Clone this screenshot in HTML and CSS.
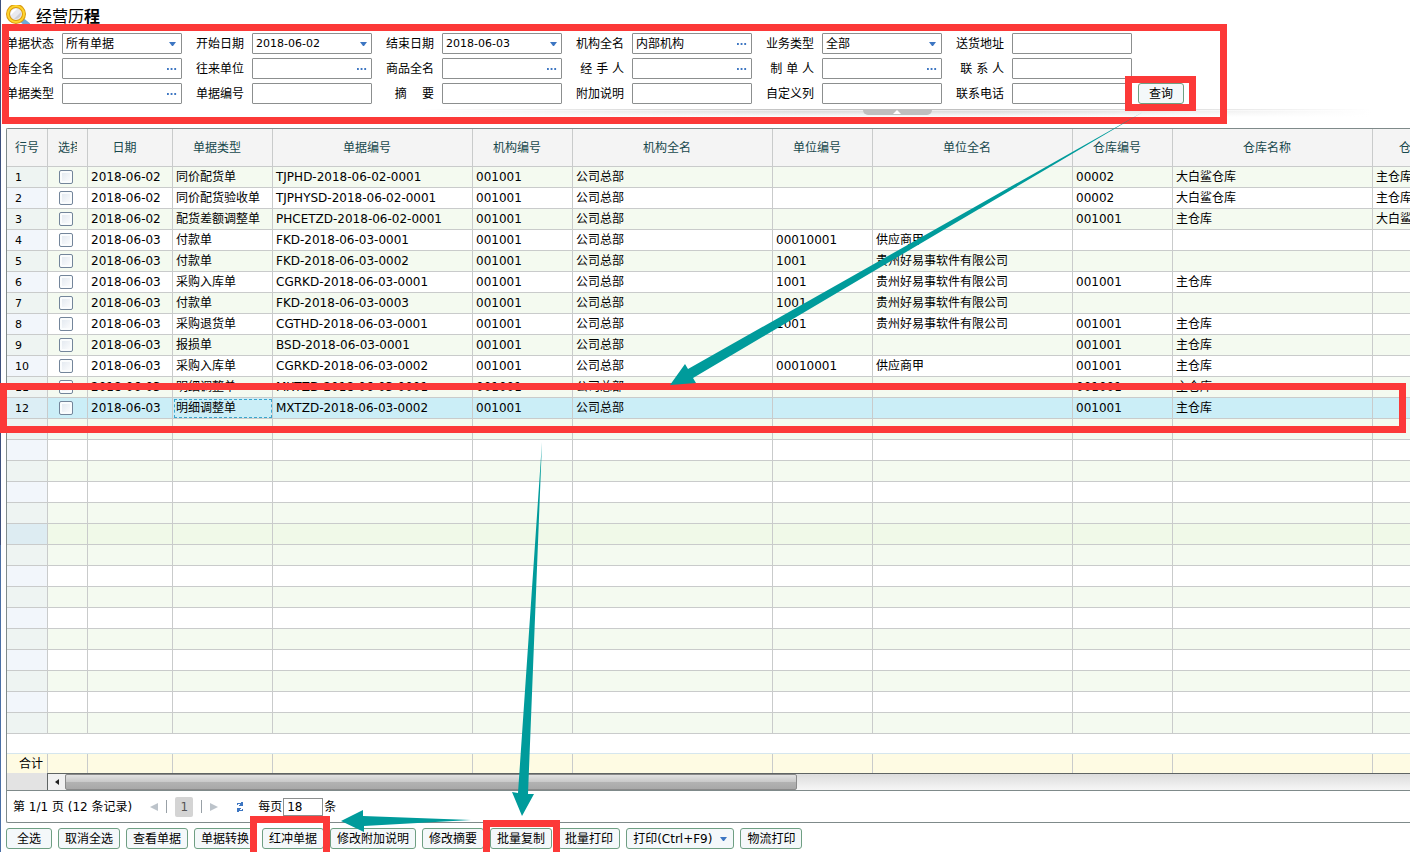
FILE: index.html
```html
<!DOCTYPE html>
<html lang="zh-CN">
<head>
<meta charset="utf-8">
<title>经营历程</title>
<link rel="stylesheet" href="styles.css">
</head>
<body>
<main class="page">
  <header class="title-bar">
    <svg class="title-icon" width="24" height="24" viewBox="0 0 24 24" aria-hidden="true">
      <path d="M17 16l5 4" stroke="#6fa9d6" stroke-width="5" stroke-linecap="round"/>
      <circle cx="10" cy="9" r="8" fill="#e9e9ee" stroke="#d99a10" stroke-width="4"/>
      <circle cx="10" cy="9" r="8" fill="none" stroke="#ffd52e" stroke-width="2"/>
      <path d="M5 10a5 5 0 0 1 6-6z" fill="#fff"/>
      <path d="M8 14l7-7a6 6 0 0 1-7 7z" fill="#cfcfd6"/>
    </svg>
    <h1 class="title">经营历<b>程</b></h1>
  </header>

  <form class="filters">
    <div class="filter-grid">
      <div class="field"><label for="f1">单据状态</label><span class="box"><select id="f1"><option>所有单据</option></select><svg class="caret" width="7" height="4" viewBox="0 0 7 4"><path d="M0 0h7L4 4H3z"/></svg></span></div>
      <div class="field"><label for="f2">开始日期</label><span class="box"><input id="f2" type="text" value="2018-06-02"><button type="button" class="pick" aria-label="选择开始日期"><svg width="7" height="4" viewBox="0 0 7 4"><path d="M0 0h7L4 4H3z"/></svg></button></span></div>
      <div class="field"><label for="f3">结束日期</label><span class="box"><input id="f3" type="text" value="2018-06-03"><button type="button" class="pick" aria-label="选择结束日期"><svg width="7" height="4" viewBox="0 0 7 4"><path d="M0 0h7L4 4H3z"/></svg></button></span></div>
      <div class="field"><label for="f4">机构全名</label><span class="box"><input id="f4" type="text" value="内部机构"><button type="button" class="pick" aria-label="选择机构"><svg width="11" height="2" viewBox="0 0 11 2"><path d="M0 0h2v2H0zM4 0h2v2H4zM8 0h2v2H8z"/></svg></button></span></div>
      <div class="field"><label for="f5">业务类型</label><span class="box"><select id="f5"><option>全部</option></select><svg class="caret" width="7" height="4" viewBox="0 0 7 4"><path d="M0 0h7L4 4H3z"/></svg></span></div>
      <div class="field"><label for="f6">送货地址</label><span class="box"><input id="f6" type="text"></span></div>

      <div class="field"><label for="f7">仓库全名</label><span class="box"><input id="f7" type="text"><button type="button" class="pick" aria-label="选择仓库"><svg width="11" height="2" viewBox="0 0 11 2"><path d="M0 0h2v2H0zM4 0h2v2H4zM8 0h2v2H8z"/></svg></button></span></div>
      <div class="field"><label for="f8">往来单位</label><span class="box"><input id="f8" type="text"><button type="button" class="pick" aria-label="选择往来单位"><svg width="11" height="2" viewBox="0 0 11 2"><path d="M0 0h2v2H0zM4 0h2v2H4zM8 0h2v2H8z"/></svg></button></span></div>
      <div class="field"><label for="f9">商品全名</label><span class="box"><input id="f9" type="text"><button type="button" class="pick" aria-label="选择商品"><svg width="11" height="2" viewBox="0 0 11 2"><path d="M0 0h2v2H0zM4 0h2v2H4zM8 0h2v2H8z"/></svg></button></span></div>
      <div class="field"><label for="f10">经 手 人</label><span class="box"><input id="f10" type="text"><button type="button" class="pick" aria-label="选择经手人"><svg width="11" height="2" viewBox="0 0 11 2"><path d="M0 0h2v2H0zM4 0h2v2H4zM8 0h2v2H8z"/></svg></button></span></div>
      <div class="field"><label for="f11">制 单 人</label><span class="box"><input id="f11" type="text"><button type="button" class="pick" aria-label="选择制单人"><svg width="11" height="2" viewBox="0 0 11 2"><path d="M0 0h2v2H0zM4 0h2v2H4zM8 0h2v2H8z"/></svg></button></span></div>
      <div class="field"><label for="f12">联 系 人</label><span class="box"><input id="f12" type="text"></span></div>

      <div class="field"><label for="f13">单据类型</label><span class="box"><input id="f13" type="text"><button type="button" class="pick" aria-label="选择单据类型"><svg width="11" height="2" viewBox="0 0 11 2"><path d="M0 0h2v2H0zM4 0h2v2H4zM8 0h2v2H8z"/></svg></button></span></div>
      <div class="field"><label for="f14">单据编号</label><span class="box"><input id="f14" type="text"></span></div>
      <div class="field"><label for="f15">摘&nbsp;&nbsp;&nbsp;&nbsp;要</label><span class="box"><input id="f15" type="text"></span></div>
      <div class="field"><label for="f16">附加说明</label><span class="box"><input id="f16" type="text"></span></div>
      <div class="field"><label for="f17">自定义列</label><span class="box"><input id="f17" type="text"></span></div>
      <div class="field"><label for="f18">联系电话</label><span class="box"><input id="f18" type="text"></span></div>
    </div>
    <button type="button" class="btn">查询</button>
  </form>

  <div class="splitter">
    <button type="button" class="collapse" aria-label="收起查询条件"><svg width="8" height="4" viewBox="0 0 8 4"><path d="M4 0l4 4H0z" fill="#fff"/></svg></button>
  </div>

  <section class="grid">
    <div class="grid-body">
      <table class="data">
        <colgroup><col class="c-no"><col class="c-check"><col class="c-date"><col class="c-s"><col class="c-l"><col class="c-s"><col class="c-l"><col class="c-s"><col class="c-l"><col class="c-s"><col class="c-l"><col class="c-tail"></colgroup>
        <thead>
          <tr><th>行号</th><th><span class="clip">选择</span></th><th>日期</th><th>单据类型</th><th>单据编号</th><th>机构编号</th><th>机构全名</th><th>单位编号</th><th>单位全名</th><th>仓库编号</th><th>仓库名称</th><th>仓库</th></tr>
        </thead>
        <tbody id="rows"></tbody>
      </table>
    </div>
    <div class="totals">
      <table class="data">
        <colgroup><col class="c-no"><col class="c-check"><col class="c-date"><col class="c-s"><col class="c-l"><col class="c-s"><col class="c-l"><col class="c-s"><col class="c-l"><col class="c-s"><col class="c-l"><col class="c-tail"></colgroup>
        <tbody><tr><td class="total-label">合计</td><td></td><td></td><td></td><td></td><td></td><td></td><td></td><td></td><td></td><td></td><td></td></tr></tbody>
      </table>
    </div>
    <div class="scroll">
      <div class="scroll-corner"></div>
      <button type="button" class="scroll-left" aria-label="向左滚动"><svg width="4" height="6" viewBox="0 0 4 6"><path d="M4 0v6L0 3z" fill="#222"/></svg></button>
      <div class="scroll-track"><div class="scroll-thumb"></div></div>
    </div>
    <nav class="pager">
      <span class="pager-info">第 1/1 页 (12 条记录)</span>
      <button type="button" class="pager-arrow" aria-label="上一页"><svg width="8" height="8" viewBox="0 0 8 8"><path d="M8 0v8L0 4z" fill="#bcc3ca"/></svg></button>
      <span class="bar"></span>
      <button type="button" class="pager-page">1</button>
      <span class="bar"></span>
      <button type="button" class="pager-arrow" aria-label="下一页"><svg width="8" height="8" viewBox="0 0 8 8"><path d="M0 0v8l8-4z" fill="#bcc3ca"/></svg></button>
      <button type="button" class="pager-refresh" aria-label="刷新"><svg width="8" height="10" viewBox="0 0 8 10"><path d="M1 1h4V0h2v4H3V3h1V2H2v1H1zM7 9H3v1H1V6h4v1H4v1h2V7h1z" fill="#3d76c2"/></svg></button>
      <label for="size">每页</label><input id="size" class="pager-size" type="text" value="18"><span>条</span>
    </nav>
  </section>

  <footer class="actions">
    <button type="button" class="btn">全选</button>
    <button type="button" class="btn">取消全选</button>
    <button type="button" class="btn">查看单据</button>
    <button type="button" class="btn">单据转换</button>
    <button type="button" class="btn">红冲单据</button>
    <button type="button" class="btn">修改附加说明</button>
    <button type="button" class="btn">修改摘要</button>
    <button type="button" class="btn">批量复制</button>
    <button type="button" class="btn">批量打印</button>
    <button type="button" class="btn">打印(Ctrl+F9)<svg width="7" height="4" viewBox="0 0 7 4"><path d="M0 0h7L4 4H3z" fill="#3d76c2"/></svg></button>
    <button type="button" class="btn">物流打印</button>
  </footer>

  <svg class="marks" aria-hidden="true">
    <g fill="none" stroke="#fc3938" stroke-width="7">
      <path d="M5.500 27.500h1218v93H5.500z"/>
      <path d="M1128.500 79.500h64v28h-64z"/>
      <path d="M3.500 386.500h1399v43H3.500z"/>
      <path d="M253.500 819.500h73v60h-73z"/>
      <path d="M486.500 823.500h70v60h-70z"/>
    </g>
    <g fill="#009b9b">
      <path d="M1143 112L688 369L685 364L670 385L696 383L693 378Z"/>
      <path d="M542 442L518 793L512 792L522 816L534 794L528 794Z"/>
      <path d="M471 820L363 816V810L341 821L364 832V826Z"/>
    </g>
  </svg>
</main>
<script src="app.js"></script>
</body>
</html>
```
FILE: styles.css
```css
* { box-sizing: border-box; }

body {
  margin: 0;
  background: #fff;
  color: #000;
  font-family: "DejaVu Sans", "Noto Sans CJK SC", sans-serif;
  font-size: 12px;
  line-height: 16px;
}

button, input, select {
  margin: 0;
  font: inherit;
  color: inherit;
}

.page {
  position: relative;
  display: flex;
  flex-direction: column;
  min-height: 100vh;
  padding: 0 0 3px 6px;
  overflow: hidden;
  background: linear-gradient(#3c4f7c 0, #3c4f7c 64%, #4a6fa5 64%) left / 1px 100% no-repeat;
}

.title-bar {
  display: flex;
  align-items: center;
  gap: 6px;
  height: 33px;
}

.title {
  margin: 0;
  font-size: 16px;
  font-weight: 400;
}

.filters {
  display: flex;
  align-items: flex-end;
  gap: 6px;
}

.filter-grid {
  display: grid;
  grid-template-columns: repeat(6, 176px);
  gap: 4px 14px;
}

.field {
  display: flex;
  align-items: center;
  gap: 8px;
}

.field label {
  width: 48px;
  text-align: right;
  white-space: nowrap;
}

.box {
  position: relative;
  display: flex;
  flex: 1;
  height: 21px;
  border: 1px solid #8c8f8f;
  border-radius: 1px;
}

.box input, .box select {
  flex: 1;
  width: 100%;
  min-width: 0;
  padding: 0 3px;
  border: 0;
  background: none;
  appearance: none;
}

.box input { font-size: 11px; }
#f4 { font-size: 12px; }

.box .caret {
  position: absolute;
  right: 5px;
  top: 8px;
  pointer-events: none;
}

.box path { fill: #3d76c2; }

.pick {
  display: flex;
  align-items: center;
  justify-content: flex-end;
  width: 18px;
  padding: 0 4px;
  border: 0;
  background: none;
}

.btn {
  display: flex;
  align-items: center;
  justify-content: center;
  gap: 8px;
  min-width: 46px;
  height: 21px;
  padding: 0 6px;
  border: 1px solid #6f9f83;
  border-radius: 3px;
  background: #f4f8fa;
  white-space: nowrap;
}

.splitter {
  display: flex;
  justify-content: center;
  width: 950px;
  height: 8px;
  margin: 5px 0 11px 416px;
  background:
    linear-gradient(90deg, #fff, transparent 40%, transparent 60%, #fff),
    linear-gradient(#c0c0c0 1px, #fff 1px, #dcdcdc 2px, #fff);
}

.collapse {
  display: flex;
  align-items: flex-end;
  justify-content: center;
  width: 69px;
  height: 6px;
  padding: 0 0 1px;
  border: 0;
  border-radius: 0 0 5px 5px;
  background: #bfbfbf;
}

.grid {
  display: flex;
  flex: 1;
  flex-direction: column;
  border: 1px solid #7f8a8a;
  border-right: 0;
  border-radius: 2px 0 0 2px;
}

.grid-body {
  flex: 1;
  overflow: hidden;
}

.data {
  width: 1466px;
  table-layout: fixed;
  border-collapse: separate;
  border-spacing: 0;
}

.c-no { width: 41px; }
.c-check { width: 40px; }
.c-date { width: 85px; }
.c-s { width: 100px; }
.c-l { width: 200px; }
.c-tail { width: 100px; }

.data th, .data td {
  overflow: hidden;
  padding: 0 3px;
  border: solid #c9cbcb;
  border-width: 0 1px 1px 0;
  white-space: nowrap;
}

.data th {
  height: 38px;
  padding-right: 14px;
  background: #f4f4f4;
  color: #17484c;
  font-weight: 400;
  text-align: center;
}

.data th:first-child { padding-right: 3px; }

.data th:last-child {
  padding-left: 26px;
  text-align: left;
}

.clip {
  display: block;
  width: 19px;
  margin-left: 7px;
  overflow: hidden;
}

.data td {
  height: 21px;
  line-height: 16px;
}

.data .num {
  padding: 2px 0 0 8px;
  background: #f2f6fb;
  font-size: 11px;
}

.data .pick-cell {
  padding: 0 13px 0 11px;
}

.data tr.odd td { background: #f4faf0; }
.data tr.odd .num { background: #eef4f2; }
.data tr.shade td { background: #f0f9e8; }
.data tr.shade .num { background: #ddecf2; }
.data tr.selected td { background: #cbeef7; }
.data tr.selected .num { background: #dceef5; }

.data .focus {
  outline: 1px dashed #3ba6cc;
  outline-offset: -2px;
}

.check {
  display: block;
  width: 14px;
  height: 14px;
  margin: 0;
  border: 1px solid #73859a;
  border-radius: 2px;
  background: linear-gradient(135deg, #dfe6ee, #fff);
  box-shadow: inset 0 0 0 2px #fafcfd;
  appearance: none;
}

.totals {
  overflow: hidden;
  border-top: 1px solid #d5e6ee;
}

.totals td {
  height: 19px;
  border-bottom: 0;
  background: #fefbe3;
}

.data .total-label {
  padding-right: 4px;
  text-align: right;
}

.scroll {
  display: flex;
  height: 18px;
  border-bottom: 1px solid #7f8a8a;
}

.scroll-corner {
  width: 40px;
  background: #e3e3e3;
}

.scroll-left {
  display: flex;
  align-items: center;
  justify-content: center;
  width: 18px;
  padding: 0;
  border: solid #5f6464;
  border-width: 1px 0 0 1px;
  background: #f1f1f1;
}

.scroll-track {
  flex: 1;
  border-top: 1px solid #5f6464;
  background: linear-gradient(#dcdcdc, #f6f6f6);
}

.scroll-thumb {
  width: 732px;
  height: 16px;
  border: 1px solid #8a8a8a;
  border-radius: 2px;
  background: linear-gradient(#e2e2e2, #c8c8c8 50%, #b2b2b2 51%, #a8a8a8);
}

.pager {
  display: flex;
  align-items: center;
  height: 31px;
  padding-left: 6px;
}

.pager-info { margin-right: 18px; }

.pager button {
  display: flex;
  align-items: center;
  justify-content: center;
  padding: 0;
  border: 0;
  background: none;
}

.pager .bar {
  width: 1px;
  height: 13px;
  margin: 0 8px;
  background: #98a0a6;
}

.pager .pager-page {
  width: 18px;
  height: 20px;
  border-radius: 2px;
  background: #d4d4d4;
  color: #555;
}

.pager .pager-refresh { margin: 0 14px 0 18px; }

.pager-size {
  width: 40px;
  height: 18px;
  margin: 0 1px;
  padding: 0 3px;
  border: 1px solid #8c8f8f;
}

.actions {
  display: flex;
  gap: 6px;
  padding-top: 5px;
}

.marks {
  position: absolute;
  top: 0;
  left: 0;
  width: 100%;
  height: 100%;
  pointer-events: none;
}
```
FILE: app.js
```js
const records = [
  ["2018-06-02", "同价配货单", "TJPHD-2018-06-02-0001", "001001", "公司总部", "", "", "00002", "大白鲨仓库", "主仓库"],
  ["2018-06-02", "同价配货验收单", "TJPHYSD-2018-06-02-0001", "001001", "公司总部", "", "", "00002", "大白鲨仓库", "主仓库"],
  ["2018-06-02", "配货差额调整单", "PHCETZD-2018-06-02-0001", "001001", "公司总部", "", "", "001001", "主仓库", "大白鲨仓库"],
  ["2018-06-03", "付款单", "FKD-2018-06-03-0001", "001001", "公司总部", "00010001", "供应商甲", "", "", ""],
  ["2018-06-03", "付款单", "FKD-2018-06-03-0002", "001001", "公司总部", "1001", "贵州好易事软件有限公司", "", "", ""],
  ["2018-06-03", "采购入库单", "CGRKD-2018-06-03-0001", "001001", "公司总部", "1001", "贵州好易事软件有限公司", "001001", "主仓库", ""],
  ["2018-06-03", "付款单", "FKD-2018-06-03-0003", "001001", "公司总部", "1001", "贵州好易事软件有限公司", "", "", ""],
  ["2018-06-03", "采购退货单", "CGTHD-2018-06-03-0001", "001001", "公司总部", "1001", "贵州好易事软件有限公司", "001001", "主仓库", ""],
  ["2018-06-03", "报损单", "BSD-2018-06-03-0001", "001001", "公司总部", "", "", "001001", "主仓库", ""],
  ["2018-06-03", "采购入库单", "CGRKD-2018-06-03-0002", "001001", "公司总部", "00010001", "供应商甲", "001001", "主仓库", ""],
  ["2018-06-03", "明细调整单", "MXTZD-2018-06-03-0001", "001001", "公司总部", "", "", "001001", "主仓库", ""],
  ["2018-06-03", "明细调整单", "MXTZD-2018-06-03-0002", "001001", "公司总部", "", "", "001001", "主仓库", ""]
];

const ROW_COUNT = 27;
const SELECTED = 12;
const SHADED = 18;
const body = document.getElementById("rows");

for (let n = 1; n <= ROW_COUNT; n++) {
  const record = records[n - 1];
  const row = body.insertRow();
  if (n % 2) row.classList.add("odd");
  if (n === SELECTED) row.classList.add("selected");
  if (n === SHADED) row.classList.add("shade");

  const num = row.insertCell();
  num.className = "num";
  num.textContent = record ? n : "";

  const pick = row.insertCell();
  pick.className = "pick-cell";
  if (record) {
    const check = document.createElement("input");
    check.type = "checkbox";
    check.className = "check";
    check.setAttribute("aria-label", "选择第 " + n + " 行");
    pick.append(check);
  }

  for (let i = 0; i < 10; i++) {
    const cell = row.insertCell();
    cell.textContent = record ? record[i] : "";
    if (n === SELECTED && i === 1) cell.classList.add("focus");
  }
}
```
